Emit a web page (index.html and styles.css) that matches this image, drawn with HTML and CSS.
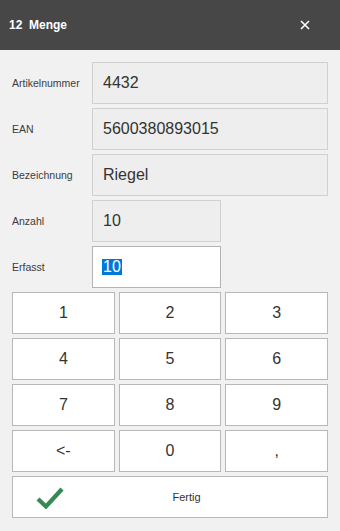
FILE: index.html
```html
<!DOCTYPE html>
<html lang="de">
<head>
    <meta charset="UTF-8"/>
    <title>Menge</title>
    <link rel="stylesheet" href="styles.css">
</head>
<body>
<header class="titlebar">
    <span class="title">12&nbsp; Menge</span>
    <button class="close" aria-label="Schließen">
        <svg width="10" height="10" viewBox="0 0 10 10">
            <path d="M1 1 L9 9 M9 1 L1 9" stroke="#fff" stroke-width="1.6" fill="none"/>
        </svg>
    </button>
</header>
<main class="dialog">
    <div class="row">
        <label>Artikelnummer</label>
        <div class="field">4432</div>
    </div>
    <div class="row">
        <label>EAN</label>
        <div class="field">5600380893015</div>
    </div>
    <div class="row">
        <label>Bezeichnung</label>
        <div class="field">Riegel</div>
    </div>
    <div class="row">
        <label>Anzahl</label>
        <div class="field short">10</div>
    </div>
    <div class="row">
        <label>Erfasst</label>
        <div class="field short edit"><span class="selected">10</span></div>
    </div>
    <div class="keypad">
        <button class="key">1</button>
        <button class="key">2</button>
        <button class="key">3</button>
        <button class="key">4</button>
        <button class="key">5</button>
        <button class="key">6</button>
        <button class="key">7</button>
        <button class="key">8</button>
        <button class="key">9</button>
        <button class="key">&lt;-</button>
        <button class="key">0</button>
        <button class="key">,</button>
        <button class="key done">
            <svg class="check" width="28" height="23" viewBox="0 0 28 23">
                <path d="M2 13 L10 20.5 L26 3" stroke="#348a52" stroke-width="4.2" fill="none" stroke-linejoin="miter"/>
            </svg>
            <span class="done-label">Fertig</span>
        </button>
    </div>
</main>
</body>
</html>
```

FILE: styles.css
```css
html, body {
    margin: 0;
    background-color: #f1f1f1;
    font-family: "Liberation Sans", Arial, sans-serif;
    color: #333;
}

.titlebar {
    height: 50px;
    background-color: #474747;
    color: white;
    display: flex;
    align-items: center;
    justify-content: space-between;
    padding: 0 0 0 9px;
}

.title {
    font-size: 12px;
    font-weight: bold;
    white-space: pre;
}

.close {
    background: none;
    border: none;
    padding: 0;
    width: 10px;
    height: 10px;
    margin-right: 30px;
    display: flex;
}

.dialog {
    display: flex;
    flex-direction: column;
    gap: 4px;
    padding: 12px 12px 0 12px;
}

.row {
    display: grid;
    grid-template-columns: 80px 1fr;
    align-items: center;
}

.row label {
    font-size: 10.5px;
    color: #3c3c3c;
}

.field {
    box-sizing: border-box;
    height: 42px;
    border: 1px solid #d0d0d0;
    background-color: #eeeeee;
    font-size: 16px;
    padding-left: 10px;
    display: flex;
    align-items: center;
}

.field.short {
    width: 129px;
}

.field.edit {
    background-color: white;
    border-color: #b4b4b4;
}

.selected {
    background-color: #0078d7;
    color: white;
    line-height: 16px;
    padding: 0 1px;
    margin-left: -1px;
}

.keypad {
    display: grid;
    grid-template-columns: repeat(3, 1fr);
    grid-auto-rows: 42px;
    gap: 4px;
}

.key {
    box-sizing: border-box;
    background-color: white;
    border: 1px solid #b8b8b8;
    font-family: "Liberation Sans", Arial, sans-serif;
    font-size: 16px;
    color: #333;
    padding: 0;
}

.key.done {
    grid-column: 1 / span 3;
    display: flex;
    align-items: center;
}

.check {
    margin-left: 23px;
}

.done-label {
    flex: 1;
    text-align: center;
    font-size: 11px;
    padding-right: 18px;
}
```
